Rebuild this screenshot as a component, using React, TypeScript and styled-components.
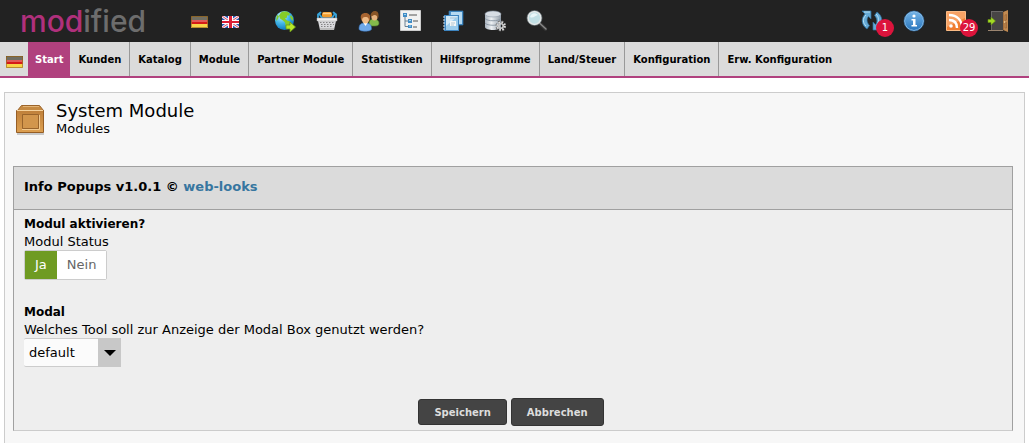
import React, { useState } from "react";
import styled, { createGlobalStyle } from "styled-components";

const GlobalStyle = createGlobalStyle`
  * { box-sizing: border-box; }
  html, body { margin: 0; }
  body {
    background: #fff;
    color: #000;
    font: 13px/18px Verdana, "DejaVu Sans", sans-serif;
  }
  button, select { font-family: inherit; }
`;

const Page = styled.div`
  display: flex;
  flex-direction: column;
  min-height: 100vh;
`;

const TopBar = styled.header`
  display: flex;
  align-items: center;
  height: 42px;
  padding: 0 20px;
  background: #222;
`;

const Brand = styled.a`
  width: 171px;
  color: #6d6d6d;
  font: 500 30px/42px Inter, sans-serif;
  text-decoration: none;
`;

const BrandAccent = styled.span`
  color: #b0307c;
`;

const Languages = styled.div`
  display: flex;
  gap: 14px;
  margin: 2px 35px 0 0;
`;

const IconLink = styled.a`
  position: relative;
  display: flex;
  flex: none;
`;

const Tools = styled.nav<{ $end?: boolean }>`
  display: flex;
  gap: 20px;
  margin-left: ${(p) => (p.$end ? "auto" : "0")};
`;

const Badge = styled.span`
  position: absolute;
  top: 9px;
  left: 15px;
  width: 18px;
  height: 18px;
  border-radius: 50%;
  background: #dc143c;
  color: #fff;
  font-size: 10px;
  line-height: 18px;
  text-align: center;
`;

const MenuBar = styled.nav`
  display: flex;
  height: 36px;
  background: #dbdbdb;
  border-bottom: 2px solid #b0417e;
`;

const MenuLanguage = styled.a`
  display: flex;
  align-items: center;
  padding: 6px 5px 0 6px;
`;

const MenuItem = styled.a<{ $active?: boolean; $last?: boolean }>`
  padding: 2px ${(p) => (p.$active ? 7 : 8)}px 0;
  border-right: ${(p) => (p.$active || p.$last ? "0" : "1px solid #999")};
  background: ${(p) => (p.$active ? "#b0417e" : "transparent")};
  color: ${(p) => (p.$active ? "#fff" : "#000")};
  font-size: 10px;
  font-weight: bold;
  line-height: 32px;
  text-decoration: none;
  white-space: nowrap;
`;

const Content = styled.main`
  flex: 1;
  margin: 14px 4px 0;
  padding: 8px 11px 12px 8px;
  background: #f7f7f7;
  border: 1px solid #ccc;
  border-bottom: 0;
`;

const PageHead = styled.div`
  display: flex;
  gap: 9px;
  height: 65px;
  padding: 2px 2px 0;
`;

const HeadText = styled.div`
  display: flex;
  flex-direction: column;
  gap: 1px;
`;

const Title = styled.h1`
  margin: 0;
  font-size: 18px;
  font-weight: normal;
  line-height: 16px;
`;

const Panel = styled.section`
  border: 1px solid #a0a0a0;
  border-bottom-color: #ccc;
  background: #eee;
`;

const PanelHead = styled.h2`
  margin: 0;
  padding: 0 10px 2px;
  background: #dbdbdb;
  border-bottom: 1px solid #a0a0a0;
  font-size: 13px;
  line-height: 40px;

  a { color: #3776a0; text-decoration: none; }
`;

const Form = styled.form`
  padding: 5px 10px 4px;
`;

const Field = styled.fieldset`
  margin: 0 0 23px;
  padding: 0;
  border: 0;
`;

const FieldTitle = styled.legend`
  padding: 0;
  font-size: 12px;
  font-weight: bold;
`;

const Hint = styled.label`
  display: block;
  line-height: 17px;
`;

const Toggle = styled.div`
  display: inline-flex;
  height: 30px;
  border: 1px solid #ccc;
  border-radius: 2px;
  background: #fff;
  vertical-align: top;
`;

const ToggleOption = styled.label<{ $on: boolean }>`
  padding: 0 10px;
  background: ${(p) => (p.$on ? "#6f9b22" : "#fff")};
  color: ${(p) => (p.$on ? "#fff" : "#666")};
  line-height: 28px;
  cursor: pointer;

  input { appearance: none; width: 0; height: 0; margin: 0; display: block; }
`;

const SelectBox = styled.div`
  position: relative;
  display: inline-flex;
  vertical-align: top;

  svg { position: absolute; top: 0; right: 0; pointer-events: none; }
`;

const Select = styled.select`
  appearance: none;
  width: 97px;
  height: 29px;
  padding: 0 24px 0 5px;
  border: 1px solid #ccc;
  border-width: 1px 0;
  border-radius: 2px;
  background: #fbfbfb;
  color: #000;
  font-size: 13px;
`;

const Actions = styled.div`
  display: flex;
  align-items: center;
  justify-content: center;
  gap: 4px;
  padding: 8px 4px 0 0;
`;

const Button = styled.button<{ $tall?: boolean }>`
  height: ${(p) => (p.$tall ? 28 : 26)}px;
  padding: 0 15px;
  border: 1px solid #333;
  border-radius: 3px;
  background: #444;
  color: #ddd;
  font-size: 10px;
  font-weight: bold;
`;

const GermanFlag = () => (
  <svg width="17" height="12" viewBox="0 0 17 12" aria-hidden="true">
    <path fill="#3b3626" d="M0 0h17v4H0z" />
    <path fill="#d51b18" d="M0 4h17v4H0z" />
    <path fill="#f8d548" d="M0 8h17v4H0z" />
    <path fill="#fff" opacity=".28" d="M1 1h15v5H1z" />
    <path fill="none" stroke="#a5762c" opacity=".75" d="M.5 .5h16v11H.5z" />
  </svg>
);

const BritishFlag = () => (
  <svg width="17" height="12" viewBox="0 0 17 12" aria-hidden="true">
    <path fill="#2755b5" d="M0 0h17v12H0z" />
    <path stroke="#f4eef4" strokeWidth="3" d="M0 0l17 12M17 0L0 12" />
    <path stroke="#dc5364" d="M0 0l17 12M17 0L0 12" />
    <path fill="#fff" d="M6 0h5v12H6zM0 4h17v4H0z" />
    <path fill="#db1f36" d="M7 0h3v12H7zM0 5h17v2H0z" />
  </svg>
);

const Glyph = ({ children }: { children: React.ReactNode }) => (
  <svg width="22" height="22" viewBox="0 0 22 22" fill="none" aria-hidden="true">
    {children}
  </svg>
);

const Globe = () => (
  <Glyph>
    <defs>
      <radialGradient id="sea" cx=".35" cy=".25" r=".8">
        <stop stopColor="#c8f3ff" />
        <stop offset=".5" stopColor="#43b7e8" />
        <stop offset="1" stopColor="#0870bd" />
      </radialGradient>
    </defs>
    <circle cx="10.500" cy="10.500" r="9.500" fill="url(#sea)" />
    <path fill="#86cb28" d="M9 1.500l4 0 3 2-1 2-2 0 0 2-2 1 2 2 3 1-1 4-3 2-1-5-2-2-3-2-1-3 2-3zM17 5l2 3 0 3-2-2-1-2zM3 5l2 1-1 3-2 2z" />
    <path fill="#b8e928" stroke="#6b981c" strokeWidth=".8" d="M12 15h4v-3l5.500 5-5.500 5v-3h-4z" />
  </Glyph>
);

const Basket = () => (
  <Glyph>
    <rect x="6" y="2" width="10" height="6" rx="2" fill="#ef9b2d" />
    <path stroke="#ffd18b" strokeWidth="1.500" d="M7 3.500h8" />
    <path stroke="#5d7f92" strokeWidth=".8" d="M6 7.500h10" />
    <path stroke="#37a5dc" strokeWidth="1.800" strokeLinecap="round" d="M4.500 2.500L2 4.500v3M17.500 2.500L20 4.500v3M4 5l2 3M18 5l-2 3" />
    <path fill="#d9d9dc" d="M2 11h18l-2 9H4z" />
    <path stroke="#858585" strokeWidth="1.200" strokeDasharray="1.500 1.500" d="M4 12.500h14M5 14.500h13M5 16.500h12" />
    <path fill="#eee" stroke="#aaa" strokeWidth=".5" d="M1 8h20v3H1z" />
    <path fill="#bbb" d="M4 18h14v2H4z" />
  </Glyph>
);

const People = () => (
  <Glyph>
    <path fill="#83b94b" stroke="#537f2b" strokeWidth=".6" d="M11 14c0-4 2-5 5-5s5 2 5 4-1 3-4 3-6 0-6-2z" />
    <ellipse cx="16.500" cy="6.500" rx="3.200" ry="4" fill="#e7b47f" />
    <path fill="#885527" d="M12.500 6c0-3 2-5 4.500-5s4 2 3.500 6l-1 2c0-3-1-4-3-4s-2 2-4 1z" />
    <path fill="#70a9e8" stroke="#3671b7" strokeWidth=".6" d="M1 19c0-5 2-6 6.500-6s6 2 6 6c0 3-12.500 3-12.500 0z" />
    <path fill="#fff" d="M5.500 13l2 3 2-3z" />
    <ellipse cx="7.500" cy="9" rx="3.800" ry="4.500" fill="#efbc88" />
    <path fill="#a76431" d="M3 9C2 5 4 3 7.500 3S13 5 12 10l-1 1c0-4-2-4-4-4S4 8 4 11z" />
  </Glyph>
);

const Tree = () => (
  <Glyph>
    <path fill="#f1f1f1" stroke="#ccc" d="M.5 .5h20v20H.5z" />
    <path stroke="#6c8193" d="M5 7v9.500h3M5 11h3" />
    <path fill="#418bc5" d="M3 3h4v4H3zM8 9h4v4H8zM8 15h4v3H8z" />
    <path stroke="#9ed5f1" d="M4 4.500h2M9 10.500h2M9 16h2" />
    <path stroke="#555" d="M9 5h8M13 11h5M13 17h4" />
  </Glyph>
);

const Notebooks = () => (
  <Glyph>
    <path fill="#4b92ca" stroke="#2c70aa" strokeWidth=".7" d="M7 1h14v14H7z" />
    <path fill="#b5d9f1" d="M9 2h11v12H9z" />
    <path fill="#3d84bf" d="M2 5h15v16H2z" />
    <path fill="#9cccec" d="M4 6h12v14H4z" />
    <path fill="#d3e9f7" d="M4 6h12L4 16z" />
    <path fill="#f4f7f7" d="M8 11h6v5H8z" />
    <path stroke="#9bb3c1" strokeWidth=".7" d="M8 8h6M9 13h4M9 15h3" />
    <path stroke="#d9e4ed" strokeWidth="1.200" d="M1 7h2M1 10h2M1 13h2M1 16h2M1 19h2" />
  </Glyph>
);

const Database = () => (
  <Glyph>
    <defs>
      <linearGradient id="metal">
        <stop stopColor="#a9b3be" />
        <stop offset=".4" stopColor="#edf0f3" />
        <stop offset="1" stopColor="#919ca8" />
      </linearGradient>
    </defs>
    <path fill="url(#metal)" d="M1 4v13c0 4 16 4 16 0V4z" />
    <ellipse cx="9" cy="4" rx="8" ry="3" fill="#d7dde4" stroke="#8f9baa" strokeWidth=".6" />
    <path stroke="#8794a1" strokeWidth=".9" d="M1 8.500c2 3 14 3 16 0M1 13c2 3 14 3 16 0" />
    <circle cx="17" cy="16" r="4" stroke="#666" strokeWidth="3" strokeDasharray="1.800 1.340" />
    <circle cx="17" cy="16" r="3.800" stroke="#ddd" strokeWidth="1.800" strokeDasharray="1.600 1.380" />
    <circle cx="17" cy="16" r="2.200" stroke="#ccc" strokeWidth="1.600" />
  </Glyph>
);

const Magnifier = () => (
  <Glyph>
    <path stroke="#383838" strokeWidth="3.500" strokeLinecap="round" d="M14.500 14l5 5" />
    <path stroke="#888" strokeWidth="1.300" strokeLinecap="round" d="M14 13.500l6 5.500" />
    <circle cx="8.500" cy="8" r="6.500" fill="#c1dfe4" stroke="#e4e8e8" strokeWidth="1.700" />
    <circle cx="8.500" cy="8" r="7.500" stroke="#829298" strokeWidth=".5" />
    <path fill="#f2fbfc" opacity=".8" d="M4 7c1-4 5-5 8-2-2 0-5 4-8 2z" />
  </Glyph>
);

const Refresh = () => (
  <Glyph>
    <g fill="#65a9d5" stroke="#2e719f" strokeWidth=".7">
      <path d="M1 1h9v8L7.500 6.500c-2 2-2 6 1 9L6 19C0 15 0 8 4 4z" />
      <path d="M21 20h-9v-8l2.500 2.500c2-2 2-6-1-9L16 2c6 4 6 11 2 15z" />
    </g>
    <path stroke="#b8e1f5" d="M3 2h6M5 5c-4 4-3 8 0 11M15 4c3 3 3 6 2 9" />
  </Glyph>
);

const Info = () => (
  <Glyph>
    <defs>
      <linearGradient id="info" x2="0" y2="1">
        <stop stopColor="#75b4e7" />
        <stop offset="1" stopColor="#2875bd" />
      </linearGradient>
    </defs>
    <circle cx="11" cy="11" r="9.500" fill="url(#info)" stroke="#9dcdf1" />
    <circle cx="11" cy="11" r="10" stroke="#2d70b1" strokeWidth=".6" />
    <circle cx="11" cy="6" r="1.600" fill="#fff" />
    <path fill="#fff" d="M8.500 9h4v6H14v1.500H8.500V15H10v-4.500H8.500z" />
  </Glyph>
);

const Feed = () => (
  <Glyph>
    <path fill="#ef7d30" stroke="#f9ba85" d="M1.500 1.500h19v19h-19z" />
    <path fill="#f7a265" d="M2 2h18v6L2 17z" />
    <circle cx="6" cy="16" r="1.800" fill="#fff" />
    <path stroke="#fff" strokeWidth="2.400" d="M4 10c5 0 8 3 8 8M4 5c8 0 13 5 13 13" />
  </Glyph>
);

const Exit = () => (
  <Glyph>
    <path fill="#6b6868" d="M4 1h12v19H4z" />
    <path fill="#474545" d="M5 2h11v18H5z" />
    <path fill="#c08a52" d="M16 2l5-2v22l-5-2z" />
    <path stroke="#9a6334" strokeWidth=".7" d="M16.500 2v18M18 5l1.500-.5V10L18 10.500zM18 13l1.500-.5V18L18 18z" />
    <circle cx="17.500" cy="12" r=".8" fill="#f3dca4" />
    <path fill="#9b8570" d="M1 20h15v1H1z" />
    <path fill="#a3da23" stroke="#648e16" strokeWidth=".6" d="M1 9.500h3V7l4.500 4L4 15v-2.500H1z" />
  </Glyph>
);

const Crate = () => (
  <svg width="32" height="34" viewBox="0 0 32 34" aria-hidden="true">
    <defs>
      <linearGradient id="wood" x2="0" y2="1">
        <stop stopColor="#bf803a" />
        <stop offset="1" stopColor="#dda051" />
      </linearGradient>
    </defs>
    <path fill="#c8c8c8" d="M2 30h27v2H2z" />
    <path fill="#c58a42" stroke="#9b642a" d="M6.500 2.500h18l4 5h-26z" />
    <path stroke="#e3b476" d="M8 3.500h16" />
    <path fill="url(#wood)" stroke="#965e25" d="M1.500 7.500h27v22h-27z" />
    <path stroke="#f6d39d" d="M2 7.500h26" />
    <path fill="#d2964c" stroke="#99642b" d="M7.500 11.500h16v14h-16z" />
    <path fill="none" stroke="#f2c98e" d="M7 26.500h17.500V12" />
  </svg>
);

const tools = [
  { name: "Shop", icon: <Globe /> },
  { name: "Bestellungen", icon: <Basket /> },
  { name: "Kunden", icon: <People /> },
  { name: "Kategorien", icon: <Tree /> },
  { name: "Content Manager", icon: <Notebooks /> },
  { name: "Datenbank", icon: <Database /> },
  { name: "Suche", icon: <Magnifier /> },
];

const statusTools = [
  { name: "Updates", icon: <Refresh />, count: 1 },
  { name: "Info", icon: <Info /> },
  { name: "News", icon: <Feed />, count: 29 },
  { name: "Abmelden", icon: <Exit /> },
];

const menu = [
  "Start",
  "Kunden",
  "Katalog",
  "Module",
  "Partner Module",
  "Statistiken",
  "Hilfsprogramme",
  "Land/Steuer",
  "Konfiguration",
  "Erw. Konfiguration",
];

export default function App() {
  const [status, setStatus] = useState("Ja");

  return (
    <Page>
      <GlobalStyle />
      <TopBar>
        <Brand href="#"><BrandAccent>mod</BrandAccent>ified</Brand>
        <Languages>
          <IconLink href="#" aria-label="Deutsch"><GermanFlag /></IconLink>
          <IconLink href="#" aria-label="English"><BritishFlag /></IconLink>
        </Languages>
        <Tools>
          {tools.map((t) => (
            <IconLink key={t.name} href="#" aria-label={t.name}>{t.icon}</IconLink>
          ))}
        </Tools>
        <Tools $end>
          {statusTools.map((t) => (
            <IconLink key={t.name} href="#" aria-label={t.name}>
              {t.icon}
              {t.count && <Badge>{t.count}</Badge>}
            </IconLink>
          ))}
        </Tools>
      </TopBar>
      <MenuBar>
        <MenuLanguage href="#" aria-label="Deutsch"><GermanFlag /></MenuLanguage>
        {menu.map((label, i) => (
          <MenuItem key={label} href="#" $active={i === 0} $last={i === menu.length - 1}>
            {label}
          </MenuItem>
        ))}
      </MenuBar>
      <Content>
        <PageHead>
          <Crate />
          <HeadText>
            <Title>System Module</Title>
            <span>Modules</span>
          </HeadText>
        </PageHead>
        <Panel>
          <PanelHead>Info Popups v1.0.1 © <a href="#">web-looks</a></PanelHead>
          <Form onSubmit={(e) => e.preventDefault()}>
            <Field>
              <FieldTitle>Modul aktivieren?</FieldTitle>
              <Hint as="div">Modul Status</Hint>
              <Toggle>
                {["Ja", "Nein"].map((v) => (
                  <ToggleOption key={v} $on={status === v}>
                    <input
                      type="radio"
                      name="status"
                      value={v}
                      checked={status === v}
                      onChange={() => setStatus(v)}
                    />
                    {v}
                  </ToggleOption>
                ))}
              </Toggle>
            </Field>
            <Field>
              <FieldTitle>Modal</FieldTitle>
              <Hint htmlFor="modal">Welches Tool soll zur Anzeige der Modal Box genutzt werden?</Hint>
              <SelectBox>
                <Select id="modal" defaultValue="default">
                  <option value="default">default</option>
                </Select>
                <svg width="23" height="29" viewBox="0 0 23 29" aria-hidden="true">
                  <path fill="#c8c8c8" d="M0 0h23v29H0z" />
                  <path d="M6 12h12l-6 6z" />
                </svg>
              </SelectBox>
            </Field>
            <Actions>
              <Button type="submit">Speichern</Button>
              <Button type="button" $tall>Abbrechen</Button>
            </Actions>
          </Form>
        </Panel>
      </Content>
    </Page>
  );
}
